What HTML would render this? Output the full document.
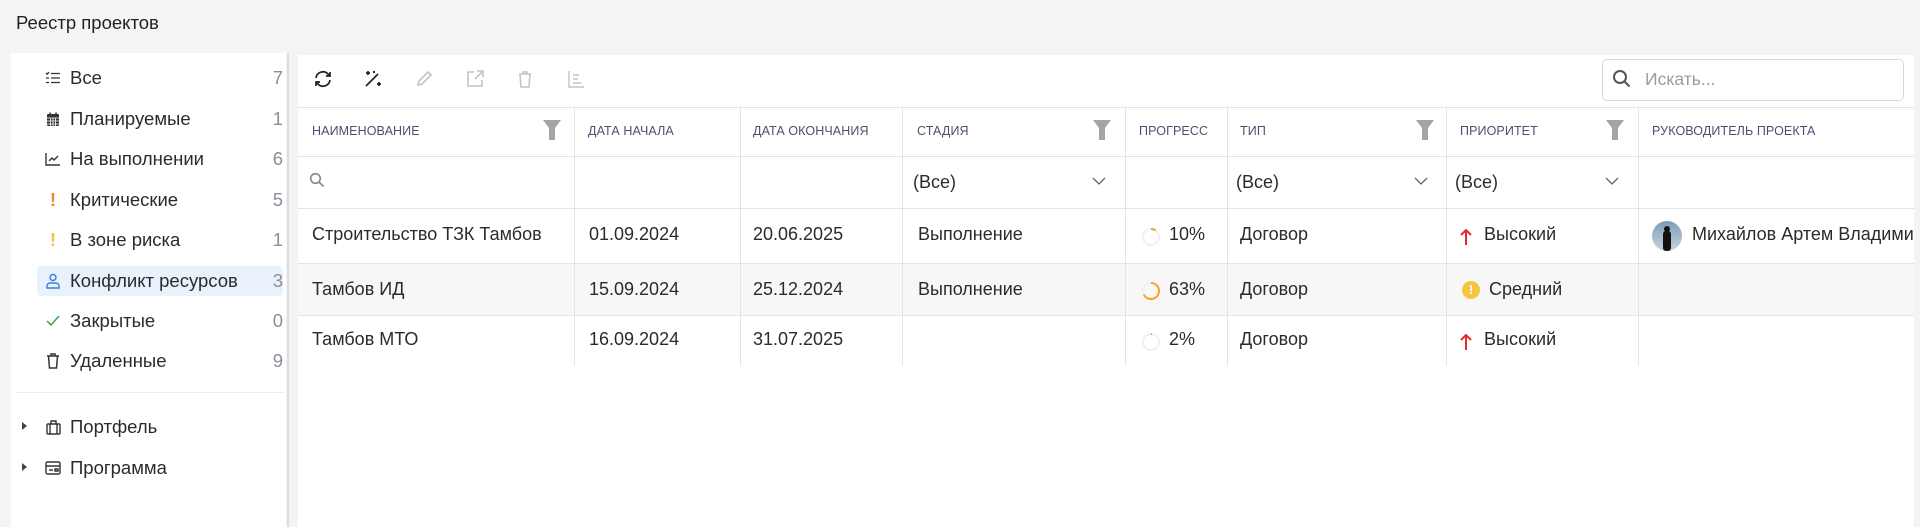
<!DOCTYPE html>
<html><head><meta charset="utf-8"><style>
*{box-sizing:border-box;margin:0;padding:0}
body{width:1920px;height:527px;background:#f3f4f6;font-family:"Liberation Sans","DejaVu Sans",sans-serif;color:#2b2b2b;position:relative;overflow:hidden}
.abs{position:absolute}
.title{left:16px;top:12px;font-size:18.5px;color:#222}
.side{left:11px;top:53px;width:275px;height:474px;background:#fff}
.sep{left:287px;top:53px;width:2px;height:474px;background:#dcdde0}
.main{left:298px;top:55px;width:1616px;height:472px;background:#fff}
.item{position:absolute;left:37px;width:246px;height:30px;font-size:18.5px;line-height:30px}
.item .ic{position:absolute;left:6px;top:0;width:20px;height:30px;display:flex;align-items:center;justify-content:center}
.item .t{position:absolute;left:33px}
.item .n{position:absolute;right:0;color:#8a8f99}
.sel{background:#e9f1fc;border-radius:4px}
.tb{position:absolute;top:68px;width:22px;height:22px}
.hcell{position:absolute;font-size:12.5px;color:#4a5070;top:124px;letter-spacing:.1px}
.vl{position:absolute;top:107px;width:1px;height:259px;background:#e3e4ea}
.hl{position:absolute;left:298px;width:1616px;height:1px;background:#e3e4ea}
.c{position:absolute;font-size:18px;color:#2b2b2b}
.fil{position:absolute;top:120px}
.chev{position:absolute;top:177px}
</style></head><body>
<div class="abs title">Реестр проектов</div>
<div class="abs side"></div>
<div class="abs sep"></div>
<div class="abs main"></div>

<div class="item" style="top:63px"><span class="ic"><svg width="16" height="14" viewBox="0 0 16 14" fill="none" stroke="#333" stroke-width="1.3"><path d="M1 2l1.2 1.2L4 1M6 2.5h9M1 7h3M6 7h9M1 11.5h3M6 11.5h9"/></svg></span><span class="t">Все</span><span class="n">7</span></div>
<div class="item" style="top:104px"><span class="ic"><svg width="14" height="15" viewBox="0 0 14 15"><rect x="1" y="2" width="12" height="12" rx="1" fill="#333"/><path d="M4 0.5v3M10 0.5v3" stroke="#333" stroke-width="1.5"/><path d="M1 6h12M1 9h12M1 12h12M4.5 6v8M7 6v8M9.5 6v8" stroke="#fff" stroke-width=".8"/></svg></span><span class="t">Планируемые</span><span class="n">1</span></div>
<div class="item" style="top:144px"><span class="ic"><svg width="16" height="14" viewBox="0 0 16 14" fill="none" stroke="#333" stroke-width="1.4"><path d="M1 1v12h14M4 9l3-3 2 2 4-4"/></svg></span><span class="t">На выполнении</span><span class="n">6</span></div>
<div class="item" style="top:185px"><span class="ic" style="color:#f08a24;font-weight:bold">!</span><span class="t">Критические</span><span class="n">5</span></div>
<div class="item" style="top:225px"><span class="ic" style="color:#f5c242;font-weight:bold">!</span><span class="t">В зоне риска</span><span class="n">1</span></div>
<div class="item sel" style="top:266px"><span class="ic"><svg width="14" height="16" viewBox="0 0 14 16" fill="none" stroke="#3d7be0" stroke-width="1.4"><circle cx="7" cy="4.5" r="3"/><path d="M1 15v-2a3 3 0 013-3h6a3 3 0 013 3v2z"/></svg></span><span class="t">Конфликт ресурсов</span><span class="n">3</span></div>
<div class="item" style="top:306px"><span class="ic"><svg width="14" height="12" viewBox="0 0 14 12" fill="none" stroke="#3aa64a" stroke-width="1.5"><path d="M1 6l4 4 8-9"/></svg></span><span class="t">Закрытые</span><span class="n">0</span></div>
<div class="item" style="top:346px"><span class="ic"><svg width="14" height="16" viewBox="0 0 14 16" fill="none" stroke="#333" stroke-width="1.5"><path d="M1 3h12M5 3V1h4v2M2.5 3l1 12h7l1-12"/></svg></span><span class="t">Удаленные</span><span class="n">9</span></div>
<div class="abs" style="left:16px;top:392px;width:268px;height:1px;background:#ececef"></div>
<div class="abs" style="left:22px;top:422px;width:0;height:0;border-left:5px solid #444;border-top:4px solid transparent;border-bottom:4px solid transparent"></div>
<div class="item" style="top:412px"><span class="ic"><svg width="15" height="15" viewBox="0 0 15 15" fill="none" stroke="#333" stroke-width="1.4"><rect x="1" y="4" width="13" height="10" rx="1"/><path d="M5 4V1h5v3M4 4v10M11 4v10"/></svg></span><span class="t">Портфель</span></div>
<div class="abs" style="left:22px;top:463px;width:0;height:0;border-left:5px solid #444;border-top:4px solid transparent;border-bottom:4px solid transparent"></div>
<div class="item" style="top:453px"><span class="ic"><svg width="16" height="14" viewBox="0 0 16 14" fill="none" stroke="#333" stroke-width="1.4"><rect x="1" y="1" width="14" height="12" rx="1.5"/><path d="M4 9h4M10 8h3v2h-3zM1 5h14"/></svg></span><span class="t">Программа</span></div>

<svg class="tb" style="left:312px" viewBox="0 0 22 22" fill="none" stroke="#222" stroke-width="1.7"><path d="M4 10a7 7 0 0112-4l2 2M18 4v4h-4M18 12a7 7 0 01-12 4l-2-2M4 18v-4h4"/></svg>
<svg class="tb" style="left:362px" viewBox="0 0 22 22" fill="none" stroke="#222" stroke-width="1.7"><path d="M4 18L16 6M6 3v4M4 5h4M17 14v4M15 16h4M12 3v2M11 4h2"/></svg>
<svg class="tb" style="left:413px" viewBox="0 0 22 22" fill="none" stroke="#c4c4c8" stroke-width="1.6"><path d="M5 17l1-4 9-9 3 3-9 9z"/></svg>
<svg class="tb" style="left:464px" viewBox="0 0 22 22" fill="none" stroke="#c4c4c8" stroke-width="1.6"><path d="M10 4H4v14h14v-6M13 3h6v6M19 3l-8 8"/></svg>
<svg class="tb" style="left:514px" viewBox="0 0 22 22" fill="none" stroke="#c4c4c8" stroke-width="1.6"><path d="M5 6h12M9 6V4h4v2M6 6l1 13h8l1-13"/></svg>
<svg class="tb" style="left:565px" viewBox="0 0 22 22" fill="none" stroke="#c4c4c8" stroke-width="1.4"><path d="M4 3v16h15M8 7h6M8 11h5M8 15h8"/></svg>
<div class="abs" style="left:1602px;top:59px;width:302px;height:42px;border:1px solid #d6d8dd;border-radius:5px"></div>
<svg class="abs" style="left:1612px;top:69px" width="20" height="20" viewBox="0 0 20 20" fill="none" stroke="#555" stroke-width="2"><circle cx="8" cy="8" r="6"/><path d="M12.5 12.5l5 5"/></svg>
<div class="abs" style="left:1645px;top:69px;font-size:17.5px;color:#9a9ca3">Искать...</div>

<div class="hl" style="top:107px"></div>
<div class="hl" style="top:156px"></div>
<div class="hl" style="top:208px"></div>
<div class="abs" style="left:298px;top:264px;width:1616px;height:51px;background:#f7f7f8"></div>
<div class="hl" style="top:263px"></div>
<div class="hl" style="top:315px"></div>
<div class="vl" style="left:574px"></div><div class="vl" style="left:740px"></div><div class="vl" style="left:902px"></div><div class="vl" style="left:1125px"></div><div class="vl" style="left:1227px"></div><div class="vl" style="left:1446px"></div><div class="vl" style="left:1638px"></div>

<div class="hcell" style="left:312px">НАИМЕНОВАНИЕ</div>
<div class="hcell" style="left:588px">ДАТА НАЧАЛА</div>
<div class="hcell" style="left:753px">ДАТА ОКОНЧАНИЯ</div>
<div class="hcell" style="left:917px">СТАДИЯ</div>
<div class="hcell" style="left:1139px">ПРОГРЕСС</div>
<div class="hcell" style="left:1240px">ТИП</div>
<div class="hcell" style="left:1460px">ПРИОРИТЕТ</div>
<div class="hcell" style="left:1652px">РУКОВОДИТЕЛЬ ПРОЕКТА</div>
<svg class="fil" style="left:543px" width="18" height="20" viewBox="0 0 18 20"><path d="M0 0h18l-6 8v12h-6V8z" fill="#a3a5aa"/></svg>
<svg class="fil" style="left:1093px" width="18" height="20" viewBox="0 0 18 20"><path d="M0 0h18l-6 8v12h-6V8z" fill="#a3a5aa"/></svg>
<svg class="fil" style="left:1416px" width="18" height="20" viewBox="0 0 18 20"><path d="M0 0h18l-6 8v12h-6V8z" fill="#a3a5aa"/></svg>
<svg class="fil" style="left:1606px" width="18" height="20" viewBox="0 0 18 20"><path d="M0 0h18l-6 8v12h-6V8z" fill="#a3a5aa"/></svg>

<svg class="abs" style="left:309px;top:172px" width="16" height="16" viewBox="0 0 16 16" fill="none" stroke="#888" stroke-width="1.6"><circle cx="6.5" cy="6.5" r="4.8"/><path d="M10 10l4.5 4.5"/></svg>
<div class="c" style="left:913px;top:172px">(Все)</div>
<div class="c" style="left:1236px;top:172px">(Все)</div>
<div class="c" style="left:1455px;top:172px">(Все)</div>
<svg class="chev" style="left:1092px" width="14" height="9" viewBox="0 0 14 9" fill="none" stroke="#666" stroke-width="1.3"><path d="M1 1l6 6 6-6"/></svg>
<svg class="chev" style="left:1414px" width="14" height="9" viewBox="0 0 14 9" fill="none" stroke="#666" stroke-width="1.3"><path d="M1 1l6 6 6-6"/></svg>
<svg class="chev" style="left:1605px" width="14" height="9" viewBox="0 0 14 9" fill="none" stroke="#666" stroke-width="1.3"><path d="M1 1l6 6 6-6"/></svg>

<div class="c" style="left:312px;top:224px">Строительство ТЗК Тамбов</div>
<div class="c" style="left:589px;top:224px">01.09.2024</div>
<div class="c" style="left:753px;top:224px">20.06.2025</div>
<div class="c" style="left:918px;top:224px">Выполнение</div>
<svg class="abs" style="left:1141px;top:227px" width="20" height="20" viewBox="0 0 20 20" fill="none" stroke-width="2"><circle cx="10" cy="10" r="8" stroke="#f0f0f0"/><path d="M10 2a8 8 0 014.7 1.5" stroke="#f5a623"/></svg>
<div class="c" style="left:1169px;top:224px">10%</div>
<div class="c" style="left:1240px;top:224px">Договор</div>
<svg class="abs" style="left:1460px;top:228px" width="12" height="18" viewBox="0 0 12 18" fill="none" stroke="#e02b2b" stroke-width="2"><path d="M6 17V2M1 7l5-5 5 5"/></svg>
<div class="c" style="left:1484px;top:224px">Высокий</div>
<div class="abs" style="left:1652px;top:221px;width:30px;height:30px;border-radius:50%;background:linear-gradient(#7f9bb8,#c9d5e0);overflow:hidden"><div style="position:absolute;left:12px;top:5px;width:6px;height:6px;border-radius:50%;background:#111"></div><div style="position:absolute;left:11px;top:10px;width:8px;height:20px;background:#111;border-radius:3px"></div></div>
<div class="c" style="left:1692px;top:224px;white-space:nowrap;width:222px;overflow:hidden">Михайлов Артем Владимирович</div>

<div class="c" style="left:312px;top:279px">Тамбов ИД</div>
<div class="c" style="left:589px;top:279px">15.09.2024</div>
<div class="c" style="left:753px;top:279px">25.12.2024</div>
<div class="c" style="left:918px;top:279px">Выполнение</div>
<svg class="abs" style="left:1141px;top:281px" width="20" height="20" viewBox="0 0 20 20" fill="none" stroke-width="2"><circle cx="10" cy="10" r="8" stroke="#f0f0f0"/><path d="M10 2a8 8 0 11-7.2 11.5" stroke="#f5a623"/></svg>
<div class="c" style="left:1169px;top:279px">63%</div>
<div class="c" style="left:1240px;top:279px">Договор</div>
<div class="abs" style="left:1462px;top:281px;width:18px;height:18px;border-radius:50%;background:#f5c542;color:#fff;font-size:13px;font-weight:bold;text-align:center;line-height:18px">!</div>
<div class="c" style="left:1489px;top:279px">Средний</div>

<div class="c" style="left:312px;top:329px">Тамбов МТО</div>
<div class="c" style="left:589px;top:329px">16.09.2024</div>
<div class="c" style="left:753px;top:329px">31.07.2025</div>
<svg class="abs" style="left:1141px;top:332px" width="20" height="20" viewBox="0 0 20 20" fill="none" stroke-width="2"><circle cx="10" cy="10" r="8" stroke="#f0f0f0"/><path d="M10 2a8 8 0 011 .06" stroke="#f5a623"/></svg>
<div class="c" style="left:1169px;top:329px">2%</div>
<div class="c" style="left:1240px;top:329px">Договор</div>
<svg class="abs" style="left:1460px;top:333px" width="12" height="18" viewBox="0 0 12 18" fill="none" stroke="#e02b2b" stroke-width="2"><path d="M6 17V2M1 7l5-5 5 5"/></svg>
<div class="c" style="left:1484px;top:329px">Высокий</div>
</body></html>
